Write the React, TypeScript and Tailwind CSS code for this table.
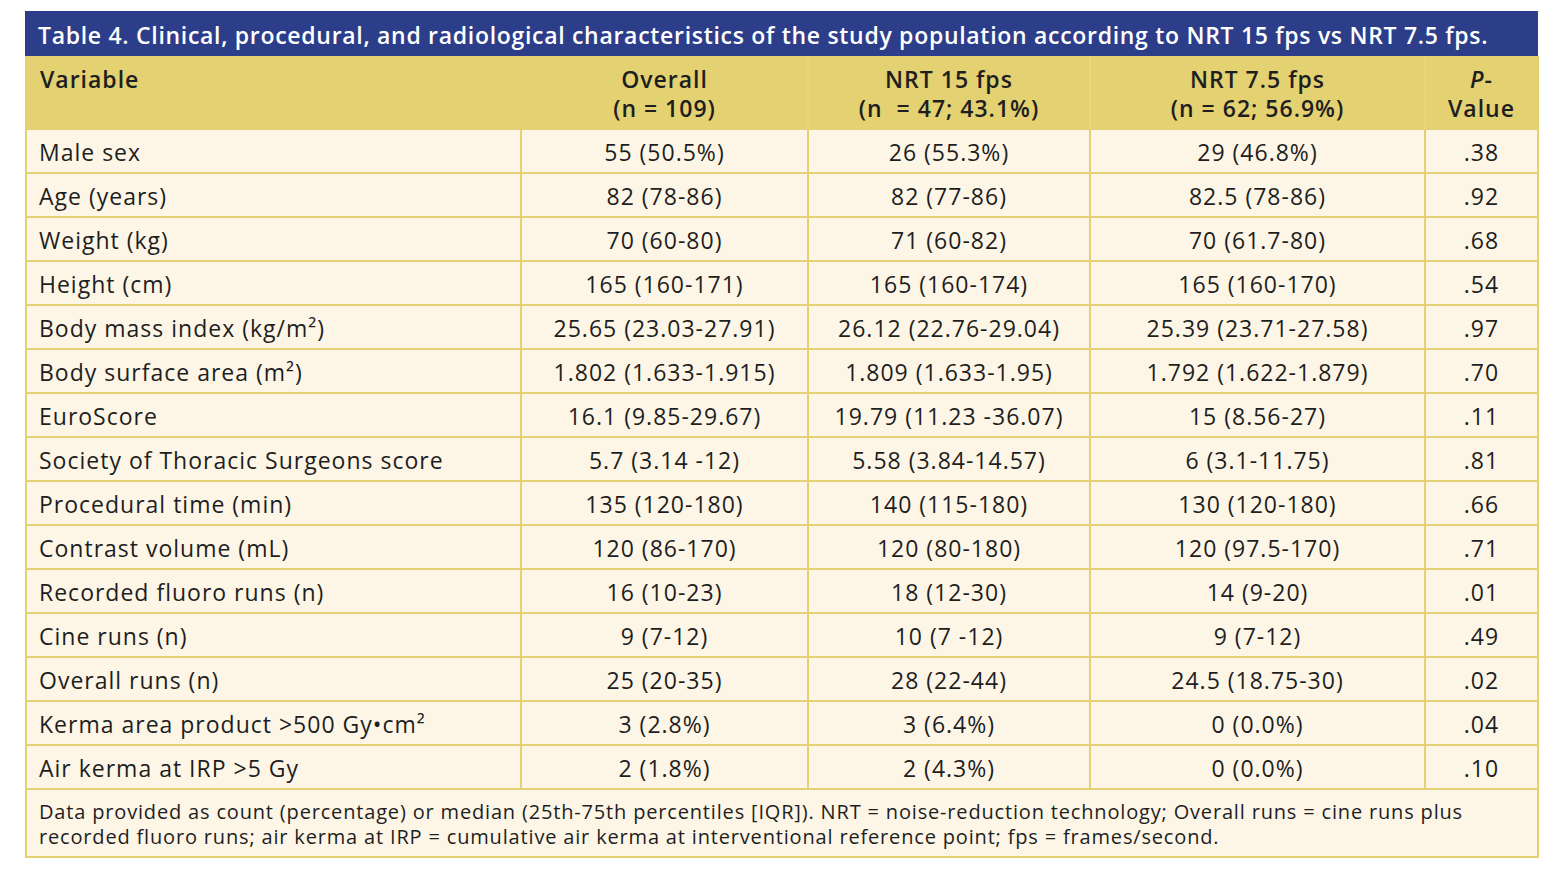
import React from "react";

const rows: [string, string, string, string, string][] = [
  ["Male sex", "55 (50.5%)", "26 (55.3%)", "29 (46.8%)", ".38"],
  ["Age (years)", "82 (78-86)", "82 (77-86)", "82.5 (78-86)", ".92"],
  ["Weight (kg)", "70 (60-80)", "71 (60-82)", "70 (61.7-80)", ".68"],
  ["Height (cm)", "165 (160-171)", "165 (160-174)", "165 (160-170)", ".54"],
  ["Body mass index (kg/m²)", "25.65 (23.03-27.91)", "26.12 (22.76-29.04)", "25.39 (23.71-27.58)", ".97"],
  ["Body surface area (m²)", "1.802 (1.633-1.915)", "1.809 (1.633-1.95)", "1.792 (1.622-1.879)", ".70"],
  ["EuroScore", "16.1 (9.85-29.67)", "19.79 (11.23 -36.07)", "15 (8.56-27)", ".11"],
  ["Society of Thoracic Surgeons score", "5.7 (3.14 -12)", "5.58 (3.84-14.57)", "6 (3.1-11.75)", ".81"],
  ["Procedural time (min)", "135 (120-180)", "140 (115-180)", "130 (120-180)", ".66"],
  ["Contrast volume (mL)", "120 (86-170)", "120 (80-180)", "120 (97.5-170)", ".71"],
  ["Recorded fluoro runs (n)", "16 (10-23)", "18 (12-30)", "14 (9-20)", ".01"],
  ["Cine runs (n)", "9 (7-12)", "10 (7 -12)", "9 (7-12)", ".49"],
  ["Overall runs (n)", "25 (20-35)", "28 (22-44)", "24.5 (18.75-30)", ".02"],
  ["Kerma area product >500 Gy•cm²", "3 (2.8%)", "3 (6.4%)", "0 (0.0%)", ".04"],
  ["Air kerma at IRP >5 Gy", "2 (1.8%)", "2 (4.3%)", "0 (0.0%)", ".10"],
];

export default function App() {
  return (
    <div
      className="w-[1556px] h-[874px] bg-white pt-[11px] pl-[25px] text-[#1e1e1e]"
      style={{ fontFamily: '"Open Sans", "Liberation Sans", sans-serif' }}
    >
      <div className="w-[1513px]">
        <div className="h-[45px] bg-[#2c3e8a] text-white font-semibold text-[23px] tracking-[0.7px] pl-[13px] pt-[3px] flex items-center whitespace-nowrap">
          Table 4. Clinical, procedural, and radiological characteristics of the study population according to NRT 15 fps vs NRT 7.5 fps.
        </div>
        <table className="w-[1512px] border-collapse table-fixed text-[23px] tracking-[1px]">
          <colgroup>
            <col className="w-[495px]" />
            <col className="w-[287px]" />
            <col className="w-[282px]" />
            <col className="w-[335px]" />
            <col className="w-[113px]" />
          </colgroup>
          <thead>
            <tr className="h-[73px] bg-[#e3d172] font-semibold leading-[29px] align-top">
              <th className="text-left pl-[13px] pt-[9px] border-x-2 border-[#e3d172] font-semibold">Variable</th>
              <th className="text-center pt-[9px] border-x-2 border-[#e8d67a] font-semibold">
                Overall
                <br />
                (n = 109)
              </th>
              <th className="text-center pt-[9px] border-x-2 border-[#e8d67a] font-semibold">
                NRT 15 fps
                <br />
                (n&nbsp; = 47; 43.1%)
              </th>
              <th className="text-center pt-[9px] border-x-2 border-[#e8d67a] font-semibold">
                NRT 7.5 fps
                <br />
                (n = 62; 56.9%)
              </th>
              <th className="text-center pt-[9px] border-x-2 border-[#e3d172] font-semibold">
                <i>P</i>-
                <br />
                Value
              </th>
            </tr>
          </thead>
          <tbody className="bg-[#fdf6e7]">
            {rows.map((r) => (
              <tr key={r[0]} className="h-[44px]">
                <td className="border-2 border-[#e4d174] pl-[12px] pt-[2px] whitespace-nowrap">{r[0]}</td>
                <td className="border-2 border-[#e4d174] text-center pt-[2px] whitespace-nowrap">{r[1]}</td>
                <td className="border-2 border-[#e4d174] text-center pt-[2px] whitespace-nowrap">{r[2]}</td>
                <td className="border-2 border-[#e4d174] text-center pt-[2px] whitespace-nowrap">{r[3]}</td>
                <td className="border-2 border-[#e4d174] text-center pt-[2px] whitespace-nowrap">{r[4]}</td>
              </tr>
            ))}
            <tr className="h-[68px]">
              <td colSpan={5} className="border-2 border-[#e4d174] pl-[12px] text-[20px] tracking-[0.83px] leading-[25px] pt-[1px] whitespace-nowrap">
                Data provided as count (percentage) or median (25th-75th percentiles [IQR]). NRT = noise-reduction technology; Overall runs = cine runs plus
                <br />
                recorded fluoro runs; air kerma at IRP = cumulative air kerma at interventional reference point; fps = frames/second.
              </td>
            </tr>
          </tbody>
        </table>
      </div>
    </div>
  );
}
